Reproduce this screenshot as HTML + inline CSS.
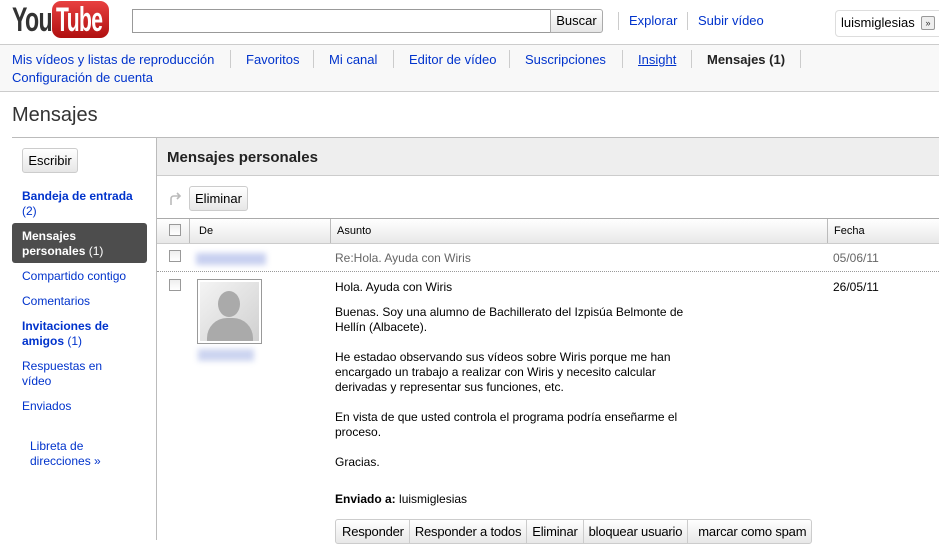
<!DOCTYPE html>
<html><head><meta charset="utf-8"><style>
*{margin:0;padding:0;box-sizing:border-box}
body{width:939px;height:540px;overflow:hidden;background:#fff;font-family:"Liberation Sans",Arial,sans-serif;font-size:12px;color:#000;position:relative}
.a{position:absolute;white-space:nowrap}
.nav{font-size:13px;color:#0033cc}
.sep{position:absolute;width:1px;background:#ccc}
.btn{position:absolute;border:1px solid #ccc;border-radius:3px;background:linear-gradient(#fff,#e6e6e6);font-size:12px;text-align:center}
.cb{position:absolute;width:12px;height:12px;border:1px solid #999;background:linear-gradient(#eee,#fff)}
.side{position:absolute;left:22px;font-size:12px;color:#0033cc;line-height:15px}
.msg{position:absolute;left:335px;font-size:12px;line-height:15px;color:#000}
</style></head><body>
<!-- logo -->
<div class="a" style="left:12px;top:1px;font-size:34px;font-weight:bold;letter-spacing:-1px;color:#333;transform:scaleX(0.68);transform-origin:left;">You</div>
<div class="a" style="left:52px;top:1px;width:57px;height:37px;background:linear-gradient(#e84040,#b01010);border-radius:9px;"></div>
<div class="a" style="left:56px;top:1px;font-size:34px;font-weight:bold;letter-spacing:-1px;color:#fff;transform:scaleX(0.62);transform-origin:left;">Tube</div>
<!-- search -->
<div class="a" style="left:132px;top:9px;width:419px;height:24px;border:1px solid #999;"></div>
<div class="btn" style="left:550px;top:9px;width:53px;height:24px;line-height:22px;font-size:13px;border-radius:0 3px 3px 0;border-color:#aaa">Buscar</div>
<div class="sep" style="left:618px;top:12px;height:18px"></div>
<div class="a nav" style="left:629px;top:13px">Explorar</div>
<div class="sep" style="left:687px;top:12px;height:18px"></div>
<div class="a nav" style="left:698px;top:13px">Subir vídeo</div>
<div class="a" style="left:835px;top:10px;width:110px;height:27px;border:1px solid #ddd;border-radius:4px;"></div>
<div class="a" style="left:841px;top:15px;font-size:13px">luismiglesias</div>
<div class="a" style="left:921px;top:16px;width:14px;height:14px;border:1px solid #999;border-radius:2px;background:#eee;font-size:9px;line-height:12px;text-align:center;color:#333">»</div>
<!-- nav -->
<div class="a" style="left:0;top:44px;width:939px;height:48px;background:#f8f8f8;border-top:1px solid #ccc;border-bottom:1px solid #ccc"></div>
<div class="a nav" style="left:12px;top:52px">Mis vídeos y listas de reproducción</div>
<div class="sep" style="left:230px;top:50px;height:18px"></div>
<div class="a nav" style="left:246px;top:52px">Favoritos</div>
<div class="sep" style="left:313px;top:50px;height:18px"></div>
<div class="a nav" style="left:329px;top:52px">Mi canal</div>
<div class="sep" style="left:393px;top:50px;height:18px"></div>
<div class="a nav" style="left:409px;top:52px">Editor de vídeo</div>
<div class="sep" style="left:509px;top:50px;height:18px"></div>
<div class="a nav" style="left:525px;top:52px">Suscripciones</div>
<div class="sep" style="left:622px;top:50px;height:18px"></div>
<div class="a nav" style="left:638px;top:52px;text-decoration:underline">Insight</div>
<div class="sep" style="left:691px;top:50px;height:18px"></div>
<div class="a" style="left:707px;top:52px;font-size:13px;font-weight:bold;color:#222">Mensajes (1)</div>
<div class="sep" style="left:800px;top:50px;height:18px"></div>
<div class="a nav" style="left:12px;top:70px">Configuración de cuenta</div>
<!-- title -->
<div class="a" style="left:12px;top:104px;font-size:20px;color:#333">Mensajes</div>
<div class="a" style="left:12px;top:137px;width:927px;height:1px;background:#bbb"></div>
<div class="a" style="left:156px;top:137px;width:1px;height:403px;background:#bbb"></div>
<!-- sidebar -->
<div class="btn" style="left:22px;top:148px;width:56px;height:25px;line-height:23px;font-size:13px">Escribir</div>
<div class="side" style="top:189px"><b>Bandeja de entrada</b><br>(2)</div>
<div class="a" style="left:12px;top:223px;width:135px;height:40px;background:#4d4d4d;border-radius:3px"></div>
<div class="side" style="top:229px;color:#fff"><b>Mensajes<br>personales</b> (1)</div>
<div class="side" style="top:269px">Compartido contigo</div>
<div class="side" style="top:294px">Comentarios</div>
<div class="side" style="top:319px"><b>Invitaciones de<br>amigos</b> (1)</div>
<div class="side" style="top:359px">Respuestas en<br>vídeo</div>
<div class="side" style="top:399px">Enviados</div>
<div class="side" style="left:30px;top:439px">Libreta de<br>direcciones »</div>
<!-- main header -->
<div class="a" style="left:157px;top:138px;width:782px;height:38px;background:#eee;border-bottom:1px solid #ccc"></div>
<div class="a" style="left:167px;top:149px;font-size:15px;font-weight:bold;color:#222">Mensajes personales</div>
<svg class="a" style="left:169px;top:192px" width="15" height="14"><path d="M2 13V7Q2 4 5 4H11M8 1L11 4L8 7" fill="none" stroke="#bbb" stroke-width="1.6"/></svg>
<div class="btn" style="left:189px;top:186px;width:59px;height:25px;line-height:23px;font-size:13px">Eliminar</div>
<!-- table header -->
<div class="a" style="left:157px;top:218px;width:782px;height:26px;background:linear-gradient(#fff,#e8e8e8);border-top:1px solid #aaa;border-bottom:1px solid #ccc"></div>
<div class="cb" style="left:169px;top:224px"></div>
<div class="sep" style="left:189px;top:219px;height:24px;background:#bbb"></div>
<div class="a" style="left:199px;top:225px;font-size:11px">De</div>
<div class="sep" style="left:330px;top:219px;height:24px;background:#bbb"></div>
<div class="a" style="left:337px;top:225px;font-size:11px">Asunto</div>
<div class="sep" style="left:827px;top:219px;height:24px;background:#bbb"></div>
<div class="a" style="left:834px;top:225px;font-size:11px">Fecha</div>
<!-- row1 -->
<div class="cb" style="left:169px;top:250px"></div>
<div class="a" style="left:196px;top:253px;width:70px;height:12px;background:#c8d0f0;filter:blur(3px)"></div>
<div class="a" style="left:335px;top:251px;color:#666">Re:Hola. Ayuda con Wiris</div>
<div class="a" style="left:833px;top:251px;color:#666">05/06/11</div>
<div class="a" style="left:157px;top:271px;width:782px;height:0;border-top:1px dotted #999"></div>
<!-- row2 -->
<div class="cb" style="left:169px;top:279px"></div>
<div class="a" style="left:197px;top:279px;width:65px;height:65px;border:1px solid #999;padding:2px;background:#fff">
<div style="width:59px;height:59px;background:linear-gradient(135deg,#f4f4f4,#d0d0d0);position:relative;overflow:hidden">
<div style="position:absolute;left:18px;top:9px;width:22px;height:26px;border-radius:50%;background:#aaa"></div>
<div style="position:absolute;left:7px;top:36px;width:46px;height:30px;border-radius:20px 20px 0 0;background:#aaa"></div></div></div>
<div class="a" style="left:198px;top:349px;width:56px;height:12px;background:#ccd4f0;filter:blur(3px)"></div>
<div class="msg" style="top:280px">Hola. Ayuda con Wiris</div>
<div class="a" style="left:833px;top:280px">26/05/11</div>
<div class="msg" style="top:305px">Buenas. Soy una alumno de Bachillerato del Izpisúa Belmonte de<br>Hellín (Albacete).</div>
<div class="msg" style="top:350px">He estadao observando sus vídeos sobre Wiris porque me han<br>encargado un trabajo a realizar con Wiris y necesito calcular<br>derivadas y representar sus funciones, etc.</div>
<div class="msg" style="top:410px">En vista de que usted controla el programa podría enseñarme el<br>proceso.</div>
<div class="msg" style="top:455px">Gracias.</div>
<div class="msg" style="top:492px"><b>Enviado a:</b> luismiglesias</div>
<div class="a" style="left:335px;top:519px;height:25px;border:1px solid #ccc;border-radius:3px;background:linear-gradient(#fff,#e8e8e8);display:flex;font-size:13px;line-height:23px;letter-spacing:-0.2px">
<span style="padding:0 5px 0 6px;border-right:1px solid #ccc">Responder</span>
<span style="padding:0 5px;border-right:1px solid #ccc">Responder a todos</span>
<span style="padding:0 5px;border-right:1px solid #ccc">Eliminar</span>
<span style="padding:0 5px;border-right:1px solid #ccc">bloquear usuario</span>
<span style="padding:0 5px 0 10px">marcar como spam</span>
</div>
</body></html>
